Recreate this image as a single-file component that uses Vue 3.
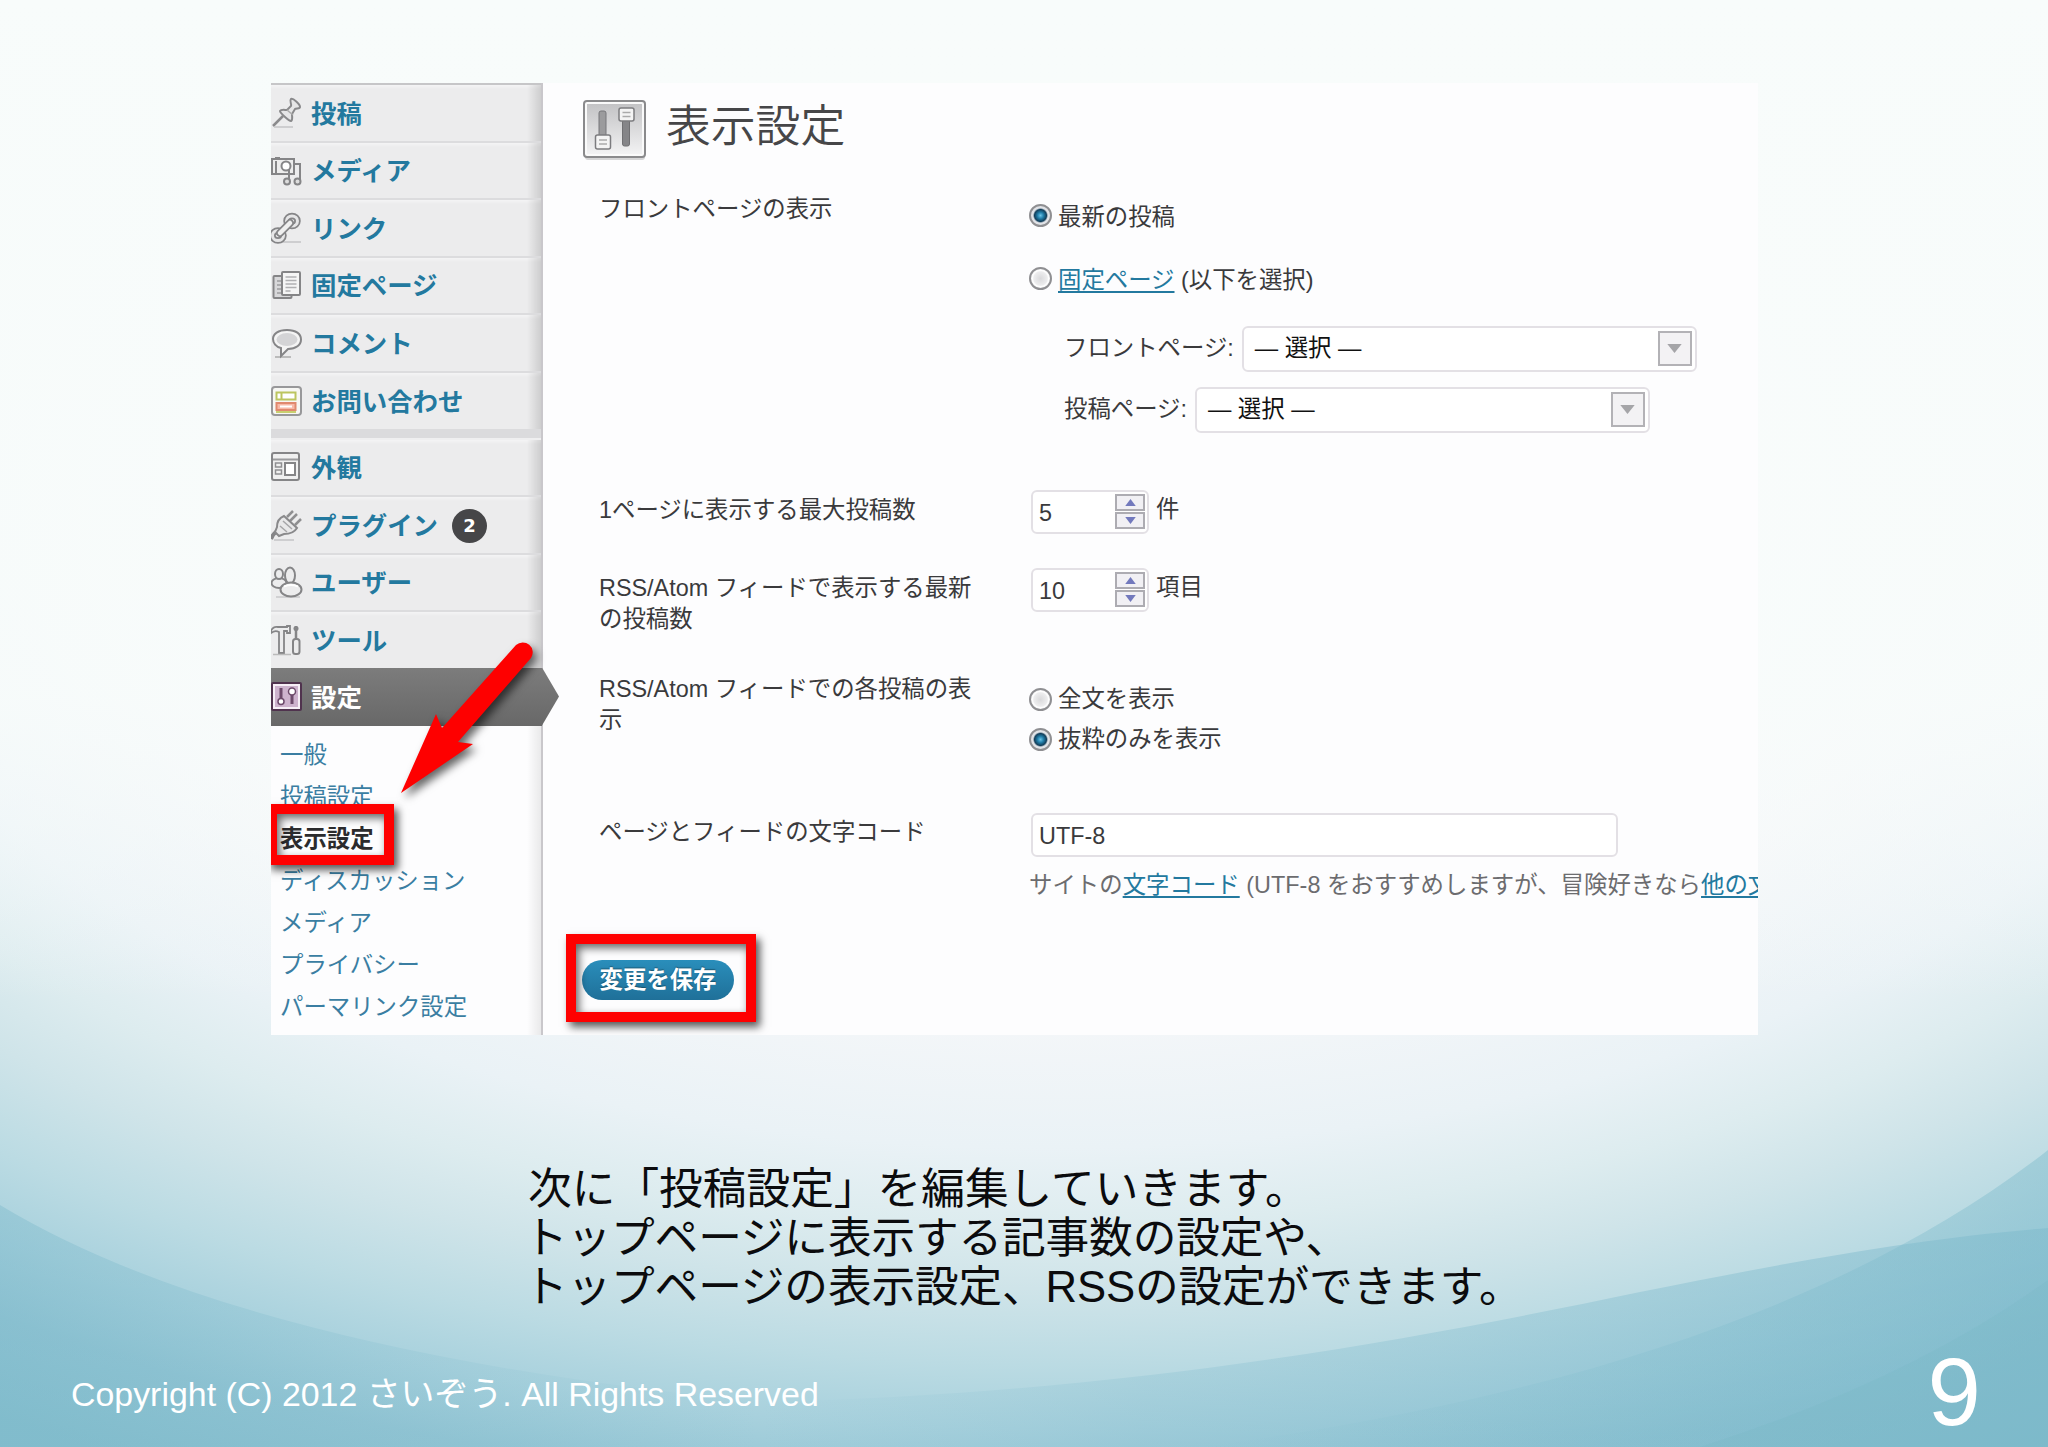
<template>
  <div class="slide">
    <svg class="slide__backdrop" viewBox="0 0 2048 1447" preserveAspectRatio="none">
      <defs>
        <radialGradient
          id="glow"
          gradientUnits="userSpaceOnUse"
          cx="0"
          cy="0"
          r="1"
          gradientTransform="translate(1050 500) scale(2000 1080)"
        >
          <stop offset="0" stop-color="#fbfdfd" />
          <stop offset="0.36" stop-color="#f9fbfc" />
          <stop offset="0.47" stop-color="#f5f7f9" />
          <stop offset="0.6" stop-color="#eaf2f6" />
          <stop offset="0.67" stop-color="#ddecef" />
          <stop offset="0.73" stop-color="#cfe4e9" />
          <stop offset="0.8" stop-color="#bbdbe3" />
          <stop offset="0.86" stop-color="#a8d1dd" />
          <stop offset="0.92" stop-color="#93c5d4" />
          <stop offset="1" stop-color="#86bfce" />
        </radialGradient>
        <linearGradient id="top" x1="0" y1="0" x2="0" y2="1">
          <stop offset="0" stop-color="#f8fcfb" />
          <stop offset="0.7" stop-color="#f8fcfb" stop-opacity="0.85" />
          <stop offset="1" stop-color="#f8fcfb" stop-opacity="0" />
        </linearGradient>
        <linearGradient id="wave" x1="0" y1="0" x2="1" y2="0">
          <stop offset="0" stop-color="#7db9cc" stop-opacity="0" />
          <stop offset="0.3" stop-color="#7db9cc" stop-opacity="0.25" />
          <stop offset="1" stop-color="#7db9cc" stop-opacity="0.5" />
        </linearGradient>
        <linearGradient id="waveLeft" x1="0" y1="0" x2="1" y2="0">
          <stop offset="0" stop-color="#7ab8ca" stop-opacity="0.4" />
          <stop offset="1" stop-color="#7ab8ca" stop-opacity="0" />
        </linearGradient>
        <linearGradient id="waveRight" x1="0" y1="0" x2="1" y2="0">
          <stop offset="0" stop-color="#7cbacb" stop-opacity="0" />
          <stop offset="1" stop-color="#7cbacb" stop-opacity="0.45" />
        </linearGradient>
      </defs>
      <rect width="2048" height="1447" fill="url(#glow)" />
      <rect width="2048" height="1000" fill="url(#top)" />
      <path d="M760 1402C1130 1394 1420 1338 1640 1292C1800 1260 1920 1238 2048 1228V1447H760Z" fill="url(#wave)" />
      <path d="M1200 1447C1560 1400 1850 1305 2048 1150V1447Z" fill="url(#waveRight)" />
      <path d="M1700 1447Q1910 1380 2048 1280V1447Z" fill="#78b6c6" opacity="0.22" />
      <path d="M0 1205Q240 1350 760 1402V1447H0Z" fill="url(#waveLeft)" />
    </svg>

    <div class="shot">
      <nav class="menu">
        <div
          v-for="item in menuItems"
          :key="item.label"
          class="menu__item"
          :class="{ 'menu__item--groupEnd': item.groupEnd, 'menu__item--active': item.active }"
        >
          <svg class="menu__icon" viewBox="0 0 32 32" v-html="icons[item.icon]"></svg>
          <span class="menu__label">{{ item.label }}</span>
          <span v-if="item.count" class="menu__count">{{ item.count }}</span>
        </div>
        <ul class="submenu">
          <li
            v-for="label in submenuItems"
            :key="label"
            class="submenu__item"
            :class="{ 'submenu__item--current': label === currentPage }"
          >
            {{ label }}
          </li>
        </ul>
      </nav>

      <main class="page">
        <header class="page__header">
          <svg class="page__icon" viewBox="0 0 64 62">
            <defs>
              <linearGradient id="panel" x1="0" y1="0" x2="0" y2="1">
                <stop offset="0" stop-color="#c3c3c5" />
                <stop offset="1" stop-color="#f2f2f3" />
              </linearGradient>
            </defs>
            <rect x="2" y="3" width="60" height="57" rx="3" fill="#bbb" opacity="0.6" />
            <rect x="1" y="1" width="61" height="56" rx="3" fill="#fafafa" stroke="#8a8a8c" stroke-width="2" />
            <rect x="4" y="4" width="55" height="50" fill="url(#panel)" />
            <rect x="16" y="11" width="7" height="30" rx="2" fill="#9b9b9d" stroke="#77777a" />
            <rect x="39.500" y="17" width="7" height="29" rx="2" fill="#858588" stroke="#707073" />
            <rect x="12.500" y="35" width="15" height="14" rx="2" fill="#f4f4f4" stroke="#7c7c7f" stroke-width="1.500" />
            <rect x="36" y="8" width="15" height="13" rx="2" fill="#f4f4f4" stroke="#7c7c7f" stroke-width="1.500" />
            <path d="M16 40h8M16 44h8M39.500 12.500h8M39.500 16.500h8" stroke="#aaa" stroke-width="1.500" />
          </svg>
          <h2 class="page__title">表示設定</h2>
        </header>

        <div class="row row--front">
          <div class="row__label">フロントページの表示</div>
          <div class="row__field">
            <label class="choice choice--latest"><i class="radio radio--on"></i><span class="choice__text">最新の投稿</span></label>
            <label class="choice choice--static">
              <i class="radio"></i>
              <span class="choice__text"><a class="link">固定ページ</a> (以下を選択)</span>
            </label>
            <div v-for="select in selects" :key="select" class="pick">
              <span class="pick__label">{{ select }}:</span>
              <span class="pick__box">
                — 選択 —
                <span class="pick__button"><svg viewBox="0 0 16 10"><path d="M0 0h16l-8 10z" fill="#a5a5a8" /></svg></span>
              </span>
            </div>
          </div>
        </div>

        <div v-for="field in numberFields" :key="field.value" class="row" :class="field.rowClass">
          <div class="row__label">{{ field.label }}</div>
          <div class="row__field row__field--number">
            <span class="number">
              {{ field.value }}
              <span class="spinner">
                <span class="spinner__half"><svg viewBox="0 0 12 8"><path d="M0 8h12L6 0z" fill="#7279bd" /></svg></span>
                <span class="spinner__half"><svg viewBox="0 0 12 8"><path d="M0 0h12L6 8z" fill="#7279bd" /></svg></span>
              </span>
            </span>
            <span class="number__unit">{{ field.unit }}</span>
          </div>
        </div>

        <div class="row row--feed">
          <div class="row__label">{{ feedLabel }}</div>
          <div class="row__field row__field--feed">
            <label class="choice"><i class="radio"></i>全文を表示</label>
            <label class="choice"><i class="radio radio--on"></i>抜粋のみを表示</label>
          </div>
        </div>

        <div class="row row--charset">
          <div class="row__label">ページとフィードの文字コード</div>
          <div class="row__field">
            <div class="text">UTF-8</div>
            <p class="help">
              サイトの<a class="link">文字コード</a> (UTF-8 をおすすめしますが、冒険好きなら<a class="link">他の文</a>
            </p>
          </div>
        </div>

        <div class="submit">
          <span class="submit__button">変更を保存</span>
        </div>
      </main>

      <!-- Red annotations over the admin screen -->
      <div class="mark mark--menu"></div>
      <div class="mark mark--save"></div>
      <svg class="pointer" viewBox="0 0 180 190">
        <path d="M29 159 64 80 70 94 144 11A10 10 0 0 1 159 24L86 108 101 110Z" fill="#fe0000" />
      </svg>
    </div>

    <p class="caption">
      <span>次に「投稿設定」を編集していきます。</span>
      <span class="caption__tight">トップページに表示する記事数の設定や、</span>
      <span class="caption__tight">トップページの表示設定、RSSの設定ができます。</span>
    </p>

    <footer class="footer">
      <span class="footer__copy">Copyright (C) 2012 さいぞう. All Rights Reserved</span>
      <span class="footer__page">9</span>
    </footer>
  </div>
</template>

<script setup>
const menuItems = [
  { label: "投稿", icon: "pin" },
  { label: "メディア", icon: "media" },
  { label: "リンク", icon: "link" },
  { label: "固定ページ", icon: "pages" },
  { label: "コメント", icon: "comment" },
  { label: "お問い合わせ", icon: "contact", groupEnd: true },
  { label: "外観", icon: "layout" },
  { label: "プラグイン", icon: "plug", count: 2 },
  { label: "ユーザー", icon: "users" },
  { label: "ツール", icon: "tools" },
  { label: "設定", icon: "settings", active: true },
];

const currentPage = "表示設定";
const submenuItems = [
  "一般",
  "投稿設定",
  "表示設定",
  "ディスカッション",
  "メディア",
  "プライバシー",
  "パーマリンク設定",
];

const selects = ["フロントページ", "投稿ページ"];

const numberFields = [
  { label: "1ページに表示する最大投稿数", value: 5, unit: "件", rowClass: "row--posts" },
  {
    label: "RSS/Atom フィードで表示する最新\nの投稿数",
    value: 10,
    unit: "項目",
    rowClass: "row--items",
  },
];

const feedLabel = "RSS/Atom フィードでの各投稿の表\n示";

const icons = {
  pin: `<path d="M2 29 12 19" stroke="#8b8b8d" stroke-width="2.500"/>
    <path d="M3 30h19" stroke="#c4c4c6" stroke-width="1.500"/>
    <path d="M20 2c2-1 9 5 9 8 0 2-4 1-5 2l-3 5c0 3 1 6-1 7-2 0-11-8-11-10 1-2 5-1 7-1l4-4c1-2-2-5 0-7z" fill="#e6e6e7" stroke="#89898b" stroke-width="2"/>
    <path d="m16 13 6 5" stroke="#aaa" stroke-width="1.500"/>`,
  media: `<rect x="1" y="5" width="22" height="15" fill="#ededed" stroke="#858587" stroke-width="2"/>
    <path d="M4 4h5M5 7v12" stroke="#858587" stroke-width="2"/>
    <circle cx="15" cy="12" r="4.500" fill="#fff" stroke="#858587" stroke-width="2"/>
    <path d="M18 27V16M29 27V10h-5" fill="none" stroke="#858587" stroke-width="2"/>
    <circle cx="16" cy="27.500" r="3" fill="#ddd" stroke="#858587" stroke-width="2"/>
    <circle cx="26.500" cy="27.500" r="3" fill="#ddd" stroke="#858587" stroke-width="2"/>`,
  link: `<path d="M8 30h22" stroke="#c4c4c6" stroke-width="1.500"/>
    <g fill="none" stroke="#858587" stroke-width="6.500"><ellipse cx="21" cy="9" rx="5.500" ry="5"/><ellipse cx="7" cy="23.500" rx="5.500" ry="5"/></g>
    <g fill="none" stroke="#e6e6e7" stroke-width="3"><ellipse cx="21" cy="9" rx="5.500" ry="5"/><ellipse cx="7" cy="23.500" rx="5.500" ry="5"/></g>
    <path d="m9 21 10-10" stroke="#858587" stroke-width="8" stroke-linecap="round"/>
    <path d="m9 21 10-10" stroke="#efefef" stroke-width="4.500" stroke-linecap="round"/>`,
  pages: `<rect x="2.500" y="7" width="18" height="22" rx="1" fill="#d8d8da" stroke="#858587" stroke-width="2"/>
    <path d="M6 12h4M6 16h4M6 20h4M6 24h10" stroke="#9c9c9e" stroke-width="1.500"/>
    <rect x="11" y="3" width="18" height="23" rx="1" fill="#f5f5f5" stroke="#858587" stroke-width="2"/>
    <path d="M14.500 8h11M14.500 11.500h11M14.500 15h11M14.500 18.500h11M14.500 22h5" stroke="#b0b0b2" stroke-width="1.500"/>`,
  comment: `<path d="M4 30h16" stroke="#bbb" stroke-width="2"/>
    <path d="M16 3c9 0 14 4 14 9.500S25 22 17 22l-7 7V21C5 20 2 16 2 12 2 7 7 3 16 3z" fill="#f4f4f4" stroke="#858587" stroke-width="2"/>
    <ellipse cx="16" cy="12.500" rx="10.500" ry="6.500" fill="#d4d4d6"/>`,
  contact: `<rect x="1" y="2" width="29" height="28" rx="3" fill="#f7f7f4" stroke="#98989a" stroke-width="2"/>
    <rect x="5.500" y="7.500" width="19" height="7" fill="#fff" stroke="#bcc560" stroke-width="2"/>
    <path d="M10.500 8v6" stroke="#bcc560" stroke-width="2"/>
    <rect x="5.500" y="18" width="19" height="7" fill="#f8b9a8" stroke="#e0896f" stroke-width="2"/>
    <path d="M9 21.500h12" stroke="#fff" stroke-width="2"/>
    <path d="M5 27h20" stroke="#c8cf70" stroke-width="2"/>`,
  layout: `<rect x="1" y="2" width="27" height="27" rx="2" fill="#f0f0f0" stroke="#858587" stroke-width="2"/>
    <path d="M2 8.500h25" stroke="#9b9b9d" stroke-width="2"/>
    <rect x="4.500" y="12" width="6" height="4" fill="none" stroke="#8f8f91" stroke-width="1.500"/>
    <rect x="4.500" y="19" width="6" height="4" fill="none" stroke="#8f8f91" stroke-width="1.500"/>
    <rect x="14" y="12" width="10" height="12" fill="#fff" stroke="#858587" stroke-width="2"/>`,
  plug: `<path d="M0 30q2-5 6-8" fill="none" stroke="#858587" stroke-width="4"/>
    <path d="M3 31h20" stroke="#c4c4c6" stroke-width="1.500"/>
    <path d="m16 8 6-6M24 16l6-6M19 12l7-7" stroke="#8f8f91" stroke-width="2.500"/>
    <path d="M13 7 26 19c-3 5-8 6-13 6l-5 2-4-4 2-5c0-5 2-9 7-11z" fill="#e8e8e9" stroke="#89898b" stroke-width="2"/>
    <path d="m12 12 9 8M9 17l7 6" stroke="#a5a5a7" stroke-width="1.500"/>`,
  users: `<path d="M5 31h24" stroke="#c8c8ca" stroke-width="1.500"/>
    <g fill="#ececed" stroke="#858587" stroke-width="2"><ellipse cx="8" cy="17" rx="7.500" ry="5"/><ellipse cx="8" cy="8" rx="4" ry="5"/>
    <ellipse cx="19" cy="9.500" rx="5" ry="8"/><ellipse cx="20" cy="23.500" rx="10.500" ry="7"/></g>
    <path d="M13 20.500q7-3 14 0" fill="none" stroke="#fff" stroke-width="2"/>`,
  tools: `<path d="M0 7q2-5 7-4h9v-1h3v7h-3V7h-3v22H8V8Q4 6 0 9z" fill="#ececed" stroke="#858587" stroke-width="1.800"/>
    <path d="M25 2v14" stroke="#858587" stroke-width="2.500"/><circle cx="25" cy="4.500" r="2.500" fill="#858587"/>
    <rect x="22" y="15" width="6.500" height="15" rx="2.500" fill="#ececed" stroke="#858587" stroke-width="2"/>
    <path d="M2 30.500h18" stroke="#bbb" stroke-width="1.500"/>`,
  settings: `<rect x="1" y="2" width="29" height="27" rx="1" fill="#f6eef6" stroke="#50334e" stroke-width="2"/>
    <rect x="4" y="5" width="23" height="21" fill="#cdb2cd"/>
    <path d="M10 7v12M21 13v10" stroke="#6d4a6b" stroke-width="3"/>
    <circle cx="10" cy="20.500" r="3" fill="#fff" stroke="#6d4a6b" stroke-width="1.500"/>
    <circle cx="21" cy="10.500" r="3.500" fill="#fff" stroke="#6d4a6b" stroke-width="1.500"/>`,
};
</script>

<style>
body {
  margin: 0;
}
</style>

<style scoped>
.slide {
  position: relative;
  box-sizing: border-box;
  width: 2048px;
  height: 1447px;
  padding-top: 83px;
  overflow: hidden;
  font-family: "Liberation Sans", "Noto Sans CJK JP", sans-serif;
}

.slide__backdrop {
  position: absolute;
  inset: 0;
  width: 100%;
  height: 100%;
}

.shot {
  position: relative;
  display: flex;
  width: 1487px;
  height: 952px;
  margin-left: 271px;
  overflow: hidden;
  background: #fdfdfe;
  color: #3a3a3c;
  font-size: 23.4px;
  line-height: 31px;
}

/* Sidebar */
.menu {
  flex: none;
  box-sizing: border-box;
  width: 272px;
  border-right: 2px solid #c9c7cb;
  background: linear-gradient(to right, transparent 256px, rgba(0, 0, 0, 0.08) 270px), #fdfdfe;
}

.menu__item {
  display: flex;
  align-items: center;
  box-sizing: border-box;
  height: 57.5px;
  border-top: 2px solid #dcdcde;
  background: linear-gradient(to right, transparent 256px, rgba(0, 0, 0, 0.13) 270px),
    linear-gradient(#f4f4f5 0, #ececed 4px);
  color: #23799f;
  font-size: 25.4px;
  font-weight: 700;
}

.menu__item:first-child {
  border-top-color: #c6c6c8;
}

.menu__item--groupEnd {
  height: 67px;
  border-bottom: 9px solid #dbdbdd;
}

.menu__item--groupEnd + .menu__item {
  border-top-color: #efeff0;
}

.menu__item--active {
  position: relative;
  width: 271px;
  height: 58px;
  border-top: 0;
  background: linear-gradient(#7c7c7c, #686868);
  color: #fff;
}

.menu__item--active::after {
  content: "";
  position: absolute;
  left: 271px;
  top: 0;
  width: 17px;
  height: 58px;
  background: linear-gradient(#7c7c7c, #686868);
  clip-path: polygon(0 0, 100% 50%, 0 100%);
}

.menu__icon {
  flex: none;
  width: 32px;
  height: 32px;
  margin-right: 8px;
  fill: none;
}

.menu__label {
  padding-top: 3px;
}

.menu__count {
  width: 35px;
  height: 34px;
  margin: 2px 0 0 14px;
  border-radius: 50%;
  background: #464648;
  color: #fff;
  font-family: "DejaVu Sans", sans-serif;
  font-size: 18px;
  line-height: 34px;
  text-align: center;
}

.submenu {
  margin: 0;
  padding: 8px 0 0 9px;
  list-style: none;
  color: #3a7ea2;
}

.submenu__item {
  height: 42.1px;
  line-height: 42.1px;
}

.submenu__item--current {
  color: #2b2b2d;
  font-weight: 700;
}

/* Settings page */
.page {
  flex: none;
  width: 1215px;
}

.page__header {
  display: flex;
  height: 97px;
  padding-left: 40px;
}

.page__icon {
  width: 64px;
  height: 62px;
  margin-top: 17px;
}

.page__title {
  margin: 14px 0 0 19px;
  color: #464648;
  font-size: 44.8px;
  font-weight: 350;
  line-height: 58px;
}

.row {
  display: grid;
  grid-template-columns: 430px auto;
  padding-left: 56px;
}

.row--front {
  height: 302px;
}

.row--posts {
  height: 78px;
}

.row--items {
  height: 101px;
}

.row--feed {
  height: 143px;
}

.row--charset {
  height: 127px;
}

.row__label {
  padding-top: 13px;
  white-space: pre;
}

.row--front .row__label {
  padding-top: 14px;
}

.choice {
  display: flex;
  align-items: center;
  height: 40px;
}

.choice--latest {
  margin-top: 15px;
}

.choice--static {
  margin: 23px 0 28px;
}

.choice__text {
  padding-top: 5px;
}

.radio {
  flex: none;
  box-sizing: border-box;
  width: 23px;
  height: 23px;
  margin-right: 6px;
  border: 2px solid #8f8f92;
  border-radius: 50%;
  background: radial-gradient(circle at 50% 50%, #d9d9db 0, #ededee 50%, #fff 60%, #d8d8da 100%);
}

.radio--on {
  background: radial-gradient(circle at 50% 50%, #6cc3e6 0, #2380ab 3px, #123e5a 6px, #e2e4e8 7.5px, #dadade 100%);
}

.link {
  color: #23799f;
  text-decoration: underline;
  text-decoration-thickness: 2px;
  text-underline-offset: 3px;
}

.pick {
  display: flex;
  align-items: center;
  height: 45px;
  margin-bottom: 16px;
  padding-left: 35px;
}

.pick__label {
  margin-right: 8px;
}

.pick__box {
  display: flex;
  align-items: center;
  justify-content: space-between;
  box-sizing: border-box;
  width: 455px;
  height: 46px;
  padding: 0 3px 0 11px;
  border: 2px solid #e3e0e5;
  border-radius: 6px;
  background: #fff;
  color: #111;
}

.pick__button {
  display: flex;
  align-items: center;
  justify-content: center;
  box-sizing: border-box;
  width: 34px;
  height: 35px;
  border: 2px solid #b3b2b6;
  background: #f3f2f4;
}

.pick__button svg {
  width: 15px;
  height: 9px;
}

.row__field--number {
  display: flex;
  align-items: flex-start;
  padding: 8px 0 0 2px;
}

.number,
.text {
  display: flex;
  align-items: center;
  box-sizing: border-box;
  height: 44px;
  padding: 2px 2px 0 6px;
  border: 2px solid #e3e0e5;
  border-radius: 6px;
  background: #fff;
}

.number {
  justify-content: space-between;
  width: 118px;
}

.number__unit {
  margin: 4px 0 0 7px;
}

.spinner {
  display: flex;
  flex-direction: column;
  gap: 1px;
  margin-bottom: 3px;
}

.spinner__half {
  display: flex;
  align-items: center;
  justify-content: center;
  box-sizing: border-box;
  width: 30px;
  height: 17px;
  border: 2px solid #adacb2;
  background: #f1f0f4;
}

.spinner__half svg {
  width: 11px;
  height: 7px;
}

.row__field--feed {
  padding: 18px 0 0;
}

.text {
  width: 587px;
  margin: 9px 0 0 2px;
}

.help {
  margin: 13px 0 0;
  color: #6c6c6f;
  letter-spacing: 0.02px;
  white-space: nowrap;
}

.submit {
  padding: 29px 0 0 39px;
}

.submit__button {
  display: block;
  width: 152px;
  height: 40px;
  border-radius: 20px;
  background: linear-gradient(#2a8ebb, #1f7099);
  color: #fff;
  font-weight: 700;
  line-height: 41px;
  text-align: center;
  text-shadow: 0 -1px 1px rgba(0, 0, 0, 0.35);
}

/* Annotations */
.mark {
  position: absolute;
  box-sizing: border-box;
  border: 10px solid #fe0000;
  box-shadow: 4px 5px 8px rgba(0, 0, 0, 0.65), inset 3px 4px 9px rgba(0, 0, 0, 0.6);
}

.mark--menu {
  left: -4px;
  top: 721px;
  width: 127px;
  height: 61px;
}

.mark--save {
  left: 295px;
  top: 851px;
  width: 190px;
  height: 88px;
}

.pointer {
  position: absolute;
  left: 101px;
  top: 551px;
  width: 180px;
  height: 190px;
  filter: drop-shadow(4px 5px 4px rgba(0, 0, 0, 0.6));
}

.caption {
  position: relative;
  display: flex;
  flex-direction: column;
  margin: 129px 0 0 528px;
  color: #0b0b0d;
  font-size: 43.7px;
  line-height: 49px;
  white-space: nowrap;
}

.caption__tight {
  margin-left: -4px;
  letter-spacing: -0.15px;
}

.footer {
  position: relative;
  display: flex;
  align-items: flex-start;
  justify-content: space-between;
  height: 107px;
  margin-top: 28px;
  padding: 0 67px 0 71px;
  color: #fff;
}

.footer__copy {
  font-size: 33.9px;
  line-height: 110px;
}

.footer__page {
  font-size: 96px;
  line-height: 106px;
}
</style>
